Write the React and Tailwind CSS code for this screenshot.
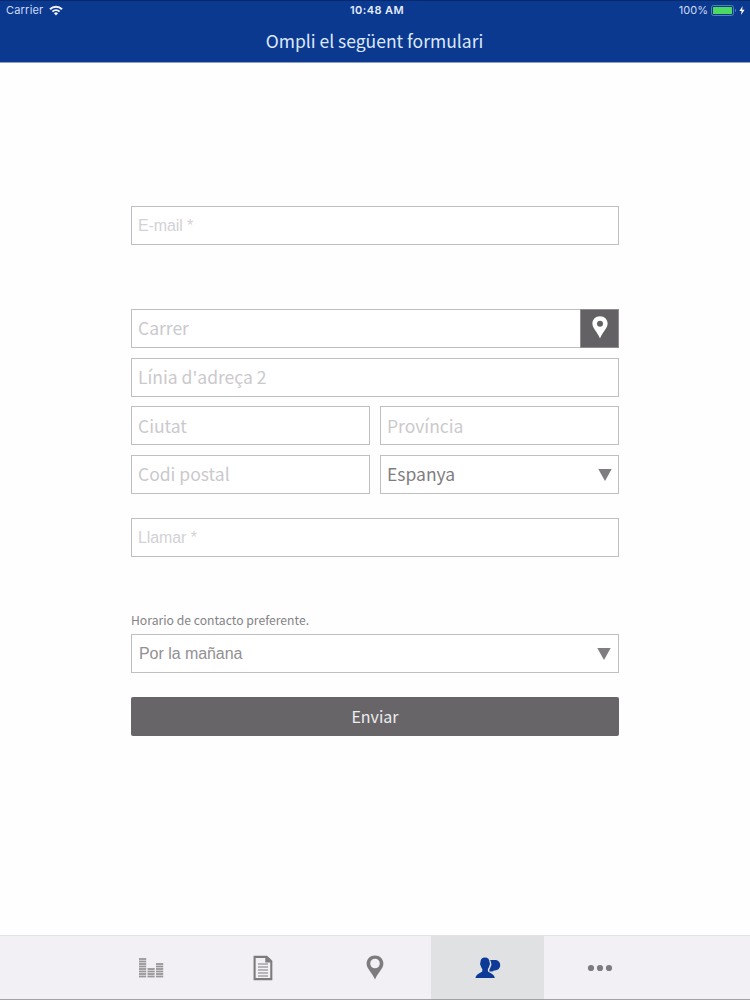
import { useState } from "react";

const inputBase =
  "block h-[39px] min-w-0 rounded-none border border-[#bfbec0] bg-white px-[6px] outline-none placeholder:text-[#cbc9cd] placeholder:opacity-100";
const sans = "font-['Noto_Sans_CJK_SC','Noto_Sans',sans-serif]";
const light = "font-['Liberation_Sans',sans-serif]";

function StatusBar() {
  return (
    <div className="grid h-[19px] grid-cols-3 items-center px-[6px] font-['Inter',sans-serif] text-[11px] leading-none text-[#cfdcf6]">
      <div className="flex items-center gap-[6px]">
        <span className="tracking-[0.2px]">Carrier</span>
        <svg width="14" height="11" viewBox="0 0 14 11" fill="none" stroke="#f2f6ff">
          <path d="M1 4.2a8.5 8.5 0 0 1 12 0" strokeWidth="2" />
          <path d="M3.4 6.7a5.1 5.1 0 0 1 7.2 0" strokeWidth="1.8" />
          <path d="M7 10.4 4.9 8.3a3 3 0 0 1 4.2 0Z" fill="#f2f6ff" stroke="none" />
        </svg>
      </div>
      <div className="pl-[4px] text-center font-semibold tracking-[0.4px] text-[#e4ecfc]">10:48 AM</div>
      <div className="-mr-[1px] flex items-center justify-end">
        <span className="mr-[3px]">100%</span>
        <svg width="27" height="11" viewBox="0 0 27 11">
          <rect x="0.5" y="0.5" width="22" height="10" rx="2" fill="none" stroke="#4a86a8" />
          <rect x="2" y="2" width="19" height="7" rx="0.5" fill="#4cd964" />
          <path d="M24 3.8c1.2.4 1.2 3 0 3.4Z" fill="#5d87c4" />
        </svg>
        <svg className="ml-[1px]" width="6" height="9" viewBox="0 0 6 9" fill="#ffffff">
          <path d="M3.6 0 .4 5h2.2L2 9l3.6-5.2H3.2Z" />
        </svg>
      </div>
    </div>
  );
}

function Arrow() {
  return (
    <svg width="14" height="12" viewBox="0 0 14 12" fill="#7f7d80">
      <path d="M.3 0h13.4L7 12Z" />
    </svg>
  );
}

function BarsIcon() {
  const bars = [
    { x: 0, rows: 8 },
    { x: 8.5, rows: 4 },
    { x: 17, rows: 6 },
  ];

  return (
    <svg className="ml-[2px]" width="25" height="20" viewBox="0 0 25 20" fill="#98969a">
      {bars.map(({ x, rows }) =>
        Array.from({ length: rows }, (_, i) => (
          <rect key={`${x}-${i}`} x={x} y={17.6 - i * 2.5} width="7.2" height="1.8" />
        ))
      )}
    </svg>
  );
}

function DocIcon() {
  return (
    <svg width="20" height="26" viewBox="0 0 20 26" fill="none" stroke="#7d7b7e">
      <path d="M1.6 1.9h12l4.7 4.4v17.8H1.6Z" strokeWidth="2.1" />
      <path d="M12.3 1.5v6h6Z" fill="#7d7b7e" stroke="none" />
      <path d="M5 9h10M5 12h10M5 15h10M5 18h10M5 21h10" strokeWidth="1.2" />
    </svg>
  );
}

function PinIcon() {
  return (
    <svg width="18" height="25" viewBox="0 0 18 25" fill="#7d7b7e" fillRule="evenodd">
      <path d="M9 .5C4.200.5.600 4 .600 8.600c0 5.300 5.400 8.800 8.400 16 3-7.200 8.400-10.700 8.400-16C17.400 4 13.800.500 9 .500ZM9 3.700a4.800 4.800 0 1 1 0 9.600 4.800 4.800 0 0 1 0-9.600Z" />
    </svg>
  );
}

function ContactIcon() {
  return (
    <svg className="ml-[1px]" width="26" height="22" viewBox="0 0 26 22" fill="#0c3a96">
      <path d="M10 .5C13 .5 14.600 2.400 14.600 5.500C15.200 6.200 15 8 14.300 8.900C14 10.200 13.400 11.200 12.900 11.900V14.200C13.400 15.800 19.300 16.200 19.800 20.900H.5C1 16.200 7 15.800 7.300 14.200V11.900C6.700 11.200 6.100 10.200 5.800 8.900C5 8 4.900 6.200 5.400 5.500C5.400 2.400 7 .5 10 .5Z" />
      <path d="M15 3H19.800C23 3 25.200 5 25.200 8C25.200 11.200 23 13.400 19.800 13.400H19C17.800 14.500 16.200 14.700 14.400 14.500V12.500C15 11.700 15.400 10.700 15.600 9.700C16.400 8.700 16.700 7.200 16 5.400C15.900 4.500 15.600 3.700 15 3Z" />
    </svg>
  );
}

function MoreIcon() {
  return (
    <svg width="26" height="8" viewBox="0 0 26 8" fill="#7d7b7e">
      <circle cx="4" cy="4" r="3.1" />
      <circle cx="13" cy="4" r="3.1" />
      <circle cx="22" cy="4" r="3.1" />
    </svg>
  );
}

const tabs = [
  { id: "stats", icon: <BarsIcon /> },
  { id: "docs", icon: <DocIcon /> },
  { id: "map", icon: <PinIcon /> },
  { id: "contact", icon: <ContactIcon /> },
  { id: "more", icon: <MoreIcon /> },
];

export default function App() {
  const [active, setActive] = useState("contact");

  return (
    <div className={`flex h-[1000px] w-[750px] flex-col overflow-hidden bg-[#fefefe] ${sans}`}>
      <header className="h-[63px] border-t border-b border-t-[#062a6c] border-b-[#8b9fcb] bg-[#0b3990]">
        <StatusBar />
        <h1 className="pr-[1px] text-center text-[17.5px] leading-[41px] text-[#dde8fb]">
          Ompli el següent formulari
        </h1>
      </header>

      <form className="mx-auto flex w-[488px] flex-1 flex-col pt-[143px]" onSubmit={(e) => e.preventDefault()}>
        <input
          className={`${inputBase} ${light} w-full text-[16px] tracking-[-0.1px] placeholder:text-[#d3d1d5]`}
          placeholder="E-mail *"
        />

        <div className="mt-[64px] flex">
          <input className={`${inputBase} flex-1 border-r-0 pb-[2px] text-[17.5px]`} placeholder="Carrer" />
          <button type="button" className="flex h-[39px] w-[39px] items-center justify-center border border-[#8d8c8e] bg-[#636164] pb-[2px]">
            <svg width="16" height="23" viewBox="0 0 16 23" fill="#ffffff" fillRule="evenodd">
              <path d="M8 .3C3.600.3.400 3.400.400 7.600c0 4.800 4.900 8.200 7.600 15 2.700-6.800 7.600-10.200 7.600-15C15.600 3.400 12.400.3 8 .3Zm0 4.500a3 3 0 1 1 0 6 3 3 0 0 1 0-6Z" />
            </svg>
          </button>
        </div>
        <input className={`${inputBase} mt-[10px] w-full pb-[2px] text-[17.5px]`} placeholder="Línia d'adreça 2" />
        <div className="mt-[9px] grid grid-cols-2 gap-[10px] text-[17.5px]">
          <input className={inputBase} placeholder="Ciutat" />
          <input className={inputBase} placeholder="Província" />
          <input className={`${inputBase} pb-[2px]`} placeholder="Codi postal" />
          <button type="button" className="flex h-[39px] items-center justify-between border border-[#bfbec0] bg-white px-[6px] text-[#7f7d80]">
            Espanya
            <Arrow />
          </button>
        </div>

        <input
          className={`${inputBase} ${light} mt-[24px] w-full text-[16px] tracking-[-0.1px] placeholder:text-[#d3d1d5]`}
          placeholder="Llamar *"
        />

        <label className="mt-[53px] text-[12.2px] leading-[20px] text-[#858386]">
          Horario de contacto preferente.
        </label>
        <button
          type="button"
          className={`mt-[4px] flex h-[39px] items-center justify-between border border-[#bfbec0] bg-white px-[7px] text-[16px] tracking-[-0.05px] text-[#929093] ${light}`}
        >
          Por la mañana
          <Arrow />
        </button>

        <button type="submit" className="mt-[24px] h-[39px] rounded-[2px] bg-[#676568] pb-[2px] text-[16px] text-[#eeedef]">
          Enviar
        </button>
      </form>

      <nav className="flex h-[65px] justify-center border-t border-b border-t-[#e2e1e4] border-b-[#a2a1a4] bg-[#f2f0f4]">
        <div className="flex w-[562px]">
          {tabs.map((tab) => (
            <button
              key={tab.id}
              type="button"
              onClick={() => setActive(tab.id)}
              className={`flex flex-1 items-center justify-center ${active === tab.id ? "bg-[#dfe1e3]" : ""}`}
            >
              {tab.icon}
            </button>
          ))}
        </div>
      </nav>
    </div>
  );
}
